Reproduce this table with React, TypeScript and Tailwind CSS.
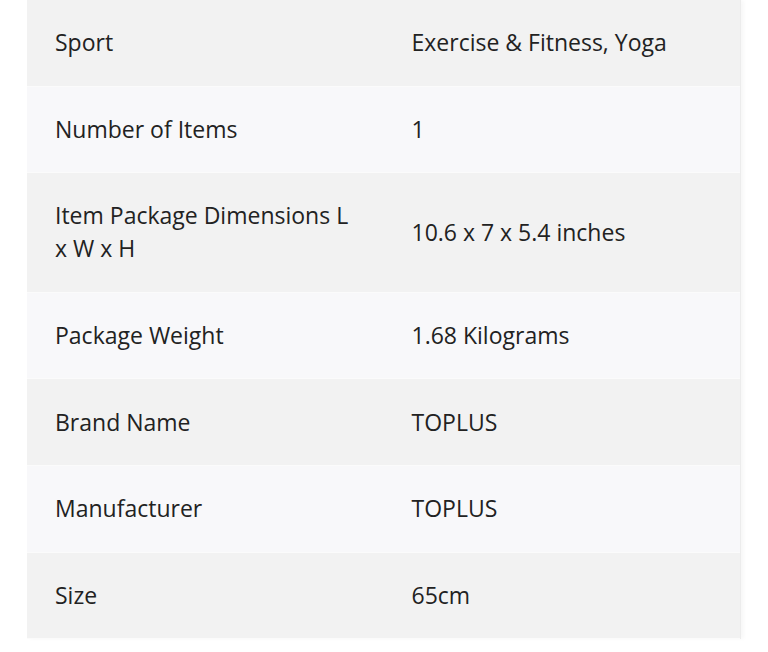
const rows: [string, string][] = [
  ["Sport", "Exercise & Fitness, Yoga"],
  ["Number of Items", "1"],
  ["Item Package Dimensions L x W x H", "10.6 x 7 x 5.4 inches"],
  ["Package Weight", "1.68 Kilograms"],
  ["Brand Name", "TOPLUS"],
  ["Manufacturer", "TOPLUS"],
  ["Size", "65cm"],
];

const App = () => {
  return (
    <div className="min-h-[652px] w-[768px] bg-white pl-[27px] font-['Open_Sans',sans-serif] text-[23px] leading-[33px] text-[#222222]">
      <div className="w-[714px] border-r border-[#ececec] shadow-[3px_0_4px_rgba(0,0,0,0.03)]">
        {rows.map(([label, value], i) => (
          <div
            key={label}
            className={
              "grid grid-cols-2 border-b border-[#fbfbfb] " +
              (i % 2 === 0 ? "bg-[#f2f2f2]" : "bg-[#f8f8fa]")
            }
          >
            <div className="px-[28px] py-[26.3px]">{label}</div>
            <div className="flex items-center px-[28px] py-[26.3px]">{value}</div>
          </div>
        ))}
      </div>
    </div>
  );
};

export default App;
